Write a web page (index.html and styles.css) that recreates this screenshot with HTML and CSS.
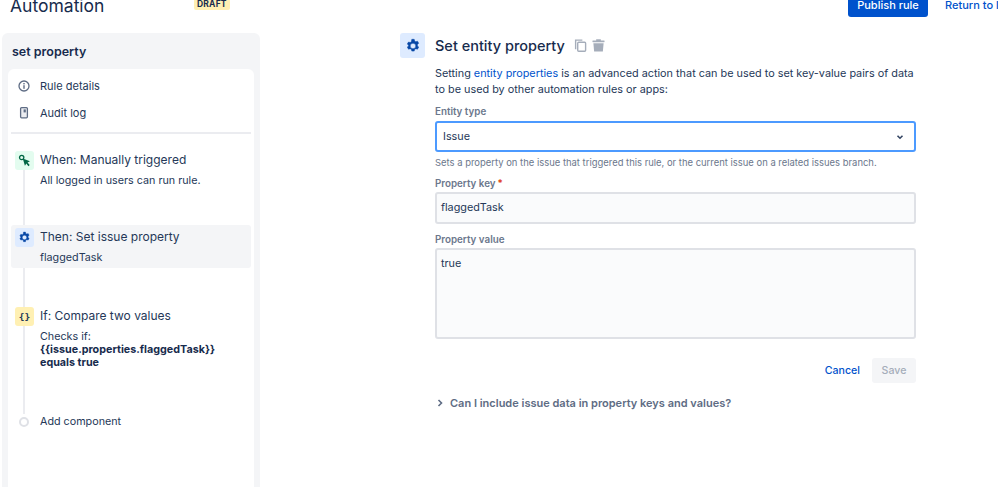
FILE: index.html
```html
<!DOCTYPE html>
<html lang="en">
<head>
  <meta charset="utf-8">
  <title>Automation</title>
  <link rel="stylesheet" href="styles.css">
</head>
<body>
  <header class="top-bar">
    <div class="top-left">
      <h1>Automation</h1>
      <span class="draft">DRAFT</span>
    </div>
    <div class="top-actions">
      <a href="#" class="publish">Publish rule</a>
      <a href="#" class="return-link">Return to list</a>
    </div>
  </header>

  <div class="content">
    <aside class="sidebar">
      <h2>set property</h2>
      <div class="rule-panel">
        <a href="#" class="nav-row">
          <svg class="nav-icon" viewBox="0 0 16 16"><circle cx="8" cy="8" r="5" fill="none" stroke="#5e6c84" stroke-width="1.3"/><rect x="7.3" y="7.2" width="1.4" height="3.6" fill="#5e6c84"/><rect x="7.3" y="5" width="1.4" height="1.4" fill="#5e6c84"/></svg>
          Rule details
        </a>
        <a href="#" class="nav-row">
          <svg class="nav-icon" viewBox="0 0 16 16"><rect x="4.6" y="2.6" width="6.8" height="10.2" rx="1" fill="#ebecf0" stroke="#5e6c84" stroke-width="1.3"/><rect x="7.6" y="4.4" width="2.2" height="3" fill="#5e6c84"/></svg>
          Audit log
        </a>
        <div class="divider"></div>

        <div class="steps">
          <div class="timeline"></div>
          <div class="step step-when">
            <span class="step-icon icon-green">
              <svg viewBox="0 0 12 12" width="13" height="13"><circle cx="3.4" cy="3.2" r="2" fill="none" stroke="#006644" stroke-width="1.2"/><path d="M4.4 4.2 L11 6.8 L8.8 7.8 L10.8 10.2 L9.6 11.2 L7.7 8.8 L6.4 10.8 Z" fill="#006644"/></svg>
            </span>
            <div>
              <div class="step-title">When: Manually triggered</div>
              <div class="step-text">All logged in users can run rule.</div>
            </div>
          </div>
          <div class="step step-then">
            <span class="step-icon icon-blue">
              <svg viewBox="0 0 16 16" width="13" height="13"><use href="#gear"/></svg>
            </span>
            <div>
              <div class="step-title">Then: Set issue property</div>
              <div class="step-text">flaggedTask</div>
            </div>
          </div>
          <div class="step step-if">
            <span class="step-icon icon-yellow">{}</span>
            <div>
              <div class="step-title">If: Compare two values</div>
              <div class="step-text">Checks if:<br><b>{{issue.properties.flaggedTask}}<br>equals true</b></div>
            </div>
          </div>
          <div class="step step-add">
            <span class="add-dot"></span>
            <div class="step-text">Add component</div>
          </div>
        </div>
      </div>
    </aside>

    <main class="editor">
      <span class="editor-icon">
        <svg viewBox="0 0 16 16" width="16" height="16">
          <defs>
            <path id="gear" fill="#0747a6" stroke="#0747a6" stroke-width=".5" stroke-linejoin="round" fill-rule="evenodd" d="M6.8 1.3h2.4l.4 1.7 1.2.7 1.7-.5 1.2 2.1-1.3 1.2v1.400l1.300 1.200-1.200 2.100-1.700-.5-1.200.7-.4 1.700H6.800l-.4-1.700-1.200-.7-1.700.5-1.200-2.100 1.300-1.200V7.300L2.300 6.100l1.200-2.100 1.700.5 1.200-.7zM8 5.200a2.800 2.800 0 1 0 0 5.600 2.800 2.800 0 0 0 0-5.600z"/>
          </defs>
          <use href="#gear"/>
        </svg>
      </span>
      <div class="editor-body">
        <div class="editor-head">
          <h2>Set entity property</h2>
          <svg class="head-icon" viewBox="0 0 14 14"><path d="M1 .5h8v1.500H2.500V11H1z" fill="#a5adba"/><rect x="4" y="3.500" width="8.500" height="9.700" rx="1" fill="none" stroke="#a5adba" stroke-width="1.500"/></svg>
          <svg class="head-icon" viewBox="0 0 14 14"><rect x=".5" y="1.500" width="13" height="2" rx=".5" fill="#a5adba"/><rect x="4.500" y=".3" width="5" height="2" fill="#a5adba"/><path d="M1.500 4.500h11l-.8 9H2.300z" fill="#a5adba"/></svg>
        </div>
        <p class="intro">Setting <a href="#">entity properties</a> is an advanced action that can be used to set key-value pairs of data to be used by other automation rules or apps:</p>

        <label class="field-label">Entity type</label>
        <div class="select-box">
          <span>Issue</span>
          <svg viewBox="0 0 10 10" width="10" height="10"><path d="M2.500 3.700 L5 6.200 L7.500 3.700" fill="none" stroke="#344563" stroke-width="1.600"/></svg>
        </div>
        <div class="help">Sets a property on the issue that triggered this rule, or the current issue on a related issues branch.</div>

        <label class="field-label label-key">Property key<span class="required">*</span></label>
        <div class="input-box">flaggedTask</div>

        <label class="field-label label-value">Property value</label>
        <div class="input-box textarea-box">true</div>

        <div class="form-actions">
          <a href="#" class="cancel">Cancel</a>
          <span class="save">Save</span>
        </div>

        <div class="faq">
          <svg viewBox="0 0 10 10" width="10" height="10"><path d="M3.500 2 L6.500 5 L3.500 8" fill="none" stroke="#5e6c84" stroke-width="1.600"/></svg>
          Can I include issue data in property keys and values?
        </div>
      </div>
    </main>
  </div>
</body>
</html>
```

FILE: styles.css
```css
html, body {
  height: 100%;
}
body {
  margin: 0;
  overflow: hidden;
  background-color: #fff;
  color: #172b4d;
  font-family: Inter, "Liberation Sans", sans-serif;
  font-size: 11px;
}
a {
  text-decoration: none;
}
.top-bar {
  display: flex;
  justify-content: space-between;
  height: 17px;
  margin-bottom: 16px;
}
.top-left {
  display: flex;
  align-items: flex-start;
  padding-left: 10px;
}
.top-left h1 {
  margin: -6px 0 0;
  width: 184px;
  font-size: 17.5px;
  line-height: 24px;
  font-weight: 400;
}
.draft {
  height: 11px;
  margin-top: -1px;
  padding: 0 3px;
  background-color: #fff0b3;
  border-radius: 2px;
  font-size: 8.5px;
  line-height: 11px;
  font-weight: 700;
  letter-spacing: .2px;
}
.top-actions {
  display: flex;
  width: 150px;
  flex-shrink: 0;
  white-space: nowrap;
}
.publish {
  width: 80px;
  height: 17px;
  flex-shrink: 0;
  background-color: #0052cc;
  border-radius: 0 0 3px 3px;
  color: #fff;
  font-weight: 500;
  line-height: 11px;
  text-align: center;
}
.return-link {
  margin-left: 17px;
  color: #0052cc;
  font-weight: 500;
  line-height: 11px;
}
.content {
  display: flex;
  align-items: flex-start;
}
.sidebar {
  width: 246px;
  height: 470px;
  margin-left: 2px;
  padding: 0 6px;
  background-color: #f4f5f7;
  border-radius: 6px 6px 0 0;
  flex-shrink: 0;
}
.sidebar h2 {
  margin: 0;
  padding: 11px 4px 0;
  height: 25px;
  font-size: 12.5px;
  line-height: 16px;
  font-weight: 600;
}
.rule-panel {
  height: 437px;
  padding-top: 3px;
  background-color: #fff;
  border-radius: 6px 6px 0 0;
}
.nav-row {
  display: flex;
  align-items: center;
  height: 27px;
  padding-left: 8px;
  gap: 8px;
  color: #253858;
}
.nav-icon {
  width: 16px;
  height: 16px;
}
.divider {
  height: 2px;
  margin: 6px 3px 0;
  background-color: #ebecf0;
}
.steps {
  position: relative;
  padding: 15px 3px 0;
}
.timeline {
  position: absolute;
  left: 15px;
  top: 25px;
  width: 2px;
  height: 255px;
  background-color: #ebecf0;
}
.step {
  position: relative;
  display: flex;
  gap: 6px;
  padding: 2px 4px;
  color: #253858;
}
.step-when {
  height: 70px;
}
.step-then {
  height: 39px;
  margin-top: 2px;
  padding: 3px 4px 1px;
  background-color: #f4f5f7;
  border-radius: 3px;
}
.step-if {
  height: 104px;
  margin-top: 37px;
}
.step-add {
  align-items: center;
  gap: 11px;
  padding-left: 8px;
}
.step-icon {
  display: flex;
  align-items: center;
  justify-content: center;
  width: 19px;
  height: 19px;
  border-radius: 3px;
  flex-shrink: 0;
  font-family: "DejaVu Sans Mono", monospace;
  font-size: 9.5px;
  font-weight: 700;
  color: #253858;
}
.icon-green {
  background-color: #e3fcef;
}
.icon-blue {
  background-color: #deebff;
}
.icon-yellow {
  background-color: #fff0b3;
}
.step-title {
  font-size: 12px;
  line-height: 17px;
}
.step-text {
  margin-top: 6px;
  font-size: 10.75px;
  line-height: 13px;
}
.step-add .step-text {
  margin-top: 0;
}
.step-text b {
  color: #172b4d;
}
.add-dot {
  width: 6px;
  height: 6px;
  background-color: #fff;
  border: 2px solid #dfe1e6;
  border-radius: 50%;
  flex-shrink: 0;
}
.editor {
  display: flex;
  gap: 10px;
  margin-left: 140px;
}
.editor-icon {
  display: flex;
  align-items: center;
  justify-content: center;
  width: 25px;
  height: 25px;
  background-color: #deebff;
  border-radius: 3px;
}
.editor-body {
  width: 481px;
}
.editor-head {
  display: flex;
  align-items: center;
  height: 25px;
}
.editor-head h2 {
  margin: 0 9px 0 0;
  font-size: 14.5px;
  font-weight: 500;
}
.head-icon {
  width: 13px;
  height: 13px;
  margin-right: 5px;
}
.intro {
  margin: 8px 0 0;
  font-size: 10.85px;
  line-height: 15.5px;
  color: #253858;
}
.intro a {
  color: #0052cc;
}
.field-label {
  display: block;
  margin-top: 8px;
  font-size: 9.8px;
  line-height: 13px;
  font-weight: 600;
  color: #6b778c;
}
.required {
  color: #de350b;
  margin-left: 2px;
}
.select-box {
  display: flex;
  align-items: center;
  justify-content: space-between;
  box-sizing: border-box;
  height: 31px;
  margin-top: 3px;
  padding: 0 9px 0 6px;
  border: 2px solid #4c9aff;
  border-radius: 3px;
  font-size: 10.8px;
  color: #253858;
}
.help {
  margin-top: 4px;
  font-size: 9.45px;
  line-height: 13px;
  color: #6b778c;
}
.input-box {
  box-sizing: border-box;
  height: 32px;
  margin-top: 2px;
  padding: 6px 4px;
  background-color: #fafbfc;
  border: 2px solid #dfe1e6;
  border-radius: 3px;
  font-size: 10.8px;
  line-height: 16px;
  color: #253858;
}
.label-key {
  margin-top: 8px;
}
.label-value {
  margin-top: 9px;
}
.textarea-box {
  height: 91px;
}
.form-actions {
  display: flex;
  justify-content: flex-end;
  align-items: center;
  gap: 12px;
  margin-top: 19px;
}
.cancel {
  color: #0052cc;
  font-size: 10.6px;
  font-weight: 500;
}
.save {
  width: 44px;
  height: 25px;
  background-color: #f4f5f7;
  border-radius: 3px;
  font-size: 10.6px;
  font-weight: 500;
  color: #a5adba;
  line-height: 25px;
  text-align: center;
}
.faq {
  display: flex;
  align-items: center;
  gap: 5px;
  margin-top: 13px;
  color: #5e6c84;
  font-weight: 600;
}
```
